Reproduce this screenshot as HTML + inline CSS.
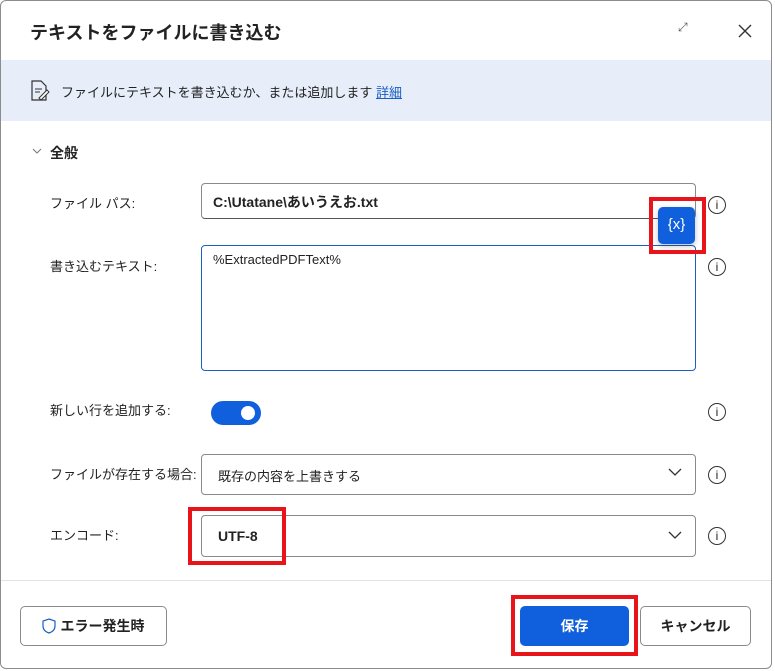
<!DOCTYPE html><html><head><meta charset="utf-8"><style>
*{box-sizing:border-box;margin:0;padding:0}
body{width:775px;height:671px;background:#fff;font-family:"Liberation Sans","Noto Sans CJK JP",sans-serif;color:#222;position:relative;overflow:hidden}
.a{position:absolute}
.lbl{font-size:13px;color:#222}
.inp{border:1px solid #8a8a8a;border-radius:4px;background:#fff}
.info{width:18px;height:18px;border:1.3px solid #333;border-radius:50%;font-size:12px;text-align:center;line-height:16px;font-family:"Liberation Sans",sans-serif}
.red{border:4px solid #e8141a}
.btn{border:1px solid #8a8a8a;border-radius:5px;font-size:14px;font-weight:bold;text-align:center}
</style></head><body>
<div class="a" style="left:0;top:0;width:772px;height:669px;border:1px solid #8c8c8c;border-radius:6px"></div>
<div class="a" style="left:30px;top:19px;font-size:18px;font-weight:bold">テキストをファイルに書き込む</div>
<div class="a" style="left:678px;top:20px;font-size:12px;color:#555">⤢</div>
<svg class="a" style="left:738px;top:24px" width="14" height="14"><path d="M1 1L13 13M13 1L1 13" stroke="#333" stroke-width="1.4"/></svg>
<div class="a" style="left:1px;top:60px;width:770px;height:61px;background:#e7eefa"></div>
<svg class="a" style="left:30px;top:80px" width="20" height="22"><path d="M2 1H11L16 6V20H2Z" fill="none" stroke="#333" stroke-width="1.2"/><path d="M5 9H12M5 12H10" stroke="#333"/><path d="M9 18L17 10L19 12L11 20Z" fill="#fff" stroke="#333"/></svg>
<div class="a" style="left:61px;top:82px;font-size:13px">ファイルにテキストを書き込むか、または追加します <span style="color:#1a5fc7;text-decoration:underline">詳細</span></div>
<svg class="a" style="left:32px;top:147px" width="10" height="8"><path d="M1 2L5 6L9 2" fill="none" stroke="#777"/></svg>
<div class="a" style="left:50px;top:143px;font-size:14px;font-weight:bold">全般</div>

<div class="a lbl" style="left:50px;top:193px">ファイル パス:</div>
<div class="a inp" style="left:201px;top:183px;width:495px;height:36px;border-bottom:1.5px solid #555"></div>
<div class="a" style="left:213px;top:192px;font-size:14px;font-weight:bold">C:\Utatane\あいうえお.txt</div>
<div class="a info" style="left:708px;top:196px">i</div>

<div class="a lbl" style="left:50px;top:256px">書き込むテキスト:</div>
<div class="a" style="left:201px;top:245px;width:495px;height:126px;border:1px solid #1a5fc7;border-radius:4px"></div>
<div class="a" style="left:213px;top:252px;font-size:13px">%ExtractedPDFText%</div>
<div class="a info" style="left:708px;top:258px">i</div>

<div class="a" style="left:658px;top:207px;width:37px;height:37px;background:#1060dd;border-radius:5px;color:#fff;font-size:15px;text-align:center;line-height:36px;box-shadow:0 2px 6px rgba(0,0,0,.25)">{x}</div>
<div class="a red" style="left:649px;top:197px;width:57px;height:57px"></div>

<div class="a lbl" style="left:50px;top:400px">新しい行を追加する:</div>
<div class="a" style="left:211px;top:401px;width:50px;height:24px;background:#1060dd;border-radius:12px"></div>
<div class="a" style="left:241px;top:406px;width:14px;height:14px;background:#fff;border-radius:50%"></div>
<div class="a info" style="left:708px;top:403px">i</div>

<div class="a lbl" style="left:50px;top:464px">ファイルが存在する場合:</div>
<div class="a inp" style="left:201px;top:454px;width:495px;height:41px"></div>
<div class="a" style="left:218px;top:466px;font-size:13px">既存の内容を上書きする</div>
<svg class="a" style="left:668px;top:468px" width="14" height="9"><path d="M1 1L7 7L13 1" fill="none" stroke="#333" stroke-width="1.3"/></svg>
<div class="a info" style="left:708px;top:466px">i</div>

<div class="a lbl" style="left:50px;top:525px">エンコード:</div>
<div class="a inp" style="left:201px;top:515px;width:495px;height:42px"></div>
<div class="a" style="left:218px;top:528px;font-size:14px;font-weight:bold">UTF-8</div>
<svg class="a" style="left:668px;top:531px" width="14" height="9"><path d="M1 1L7 7L13 1" fill="none" stroke="#333" stroke-width="1.3"/></svg>
<div class="a info" style="left:708px;top:527px">i</div>
<div class="a red" style="left:188px;top:507px;width:98px;height:58px"></div>

<div class="a" style="left:1px;top:580px;width:770px;height:1px;background:#e3e3e3"></div>
<div class="a btn" style="left:20px;top:606px;width:147px;height:40px;line-height:38px;padding-left:18px">エラー発生時</div>
<svg class="a" style="left:42px;top:618px" width="14" height="16"><path d="M7 1L13 3V8C13 12 10 14 7 15C4 14 1 12 1 8V3Z" fill="none" stroke="#1a5fc7" stroke-width="1.2"/></svg>
<div class="a btn" style="left:520px;top:606px;width:109px;height:40px;line-height:38px;background:#1060dd;border-color:#1060dd;color:#fff">保存</div>
<div class="a red" style="left:511px;top:595px;width:127px;height:61px"></div>
<div class="a btn" style="left:640px;top:606px;width:111px;height:40px;line-height:38px">キャンセル</div>
</body></html>
